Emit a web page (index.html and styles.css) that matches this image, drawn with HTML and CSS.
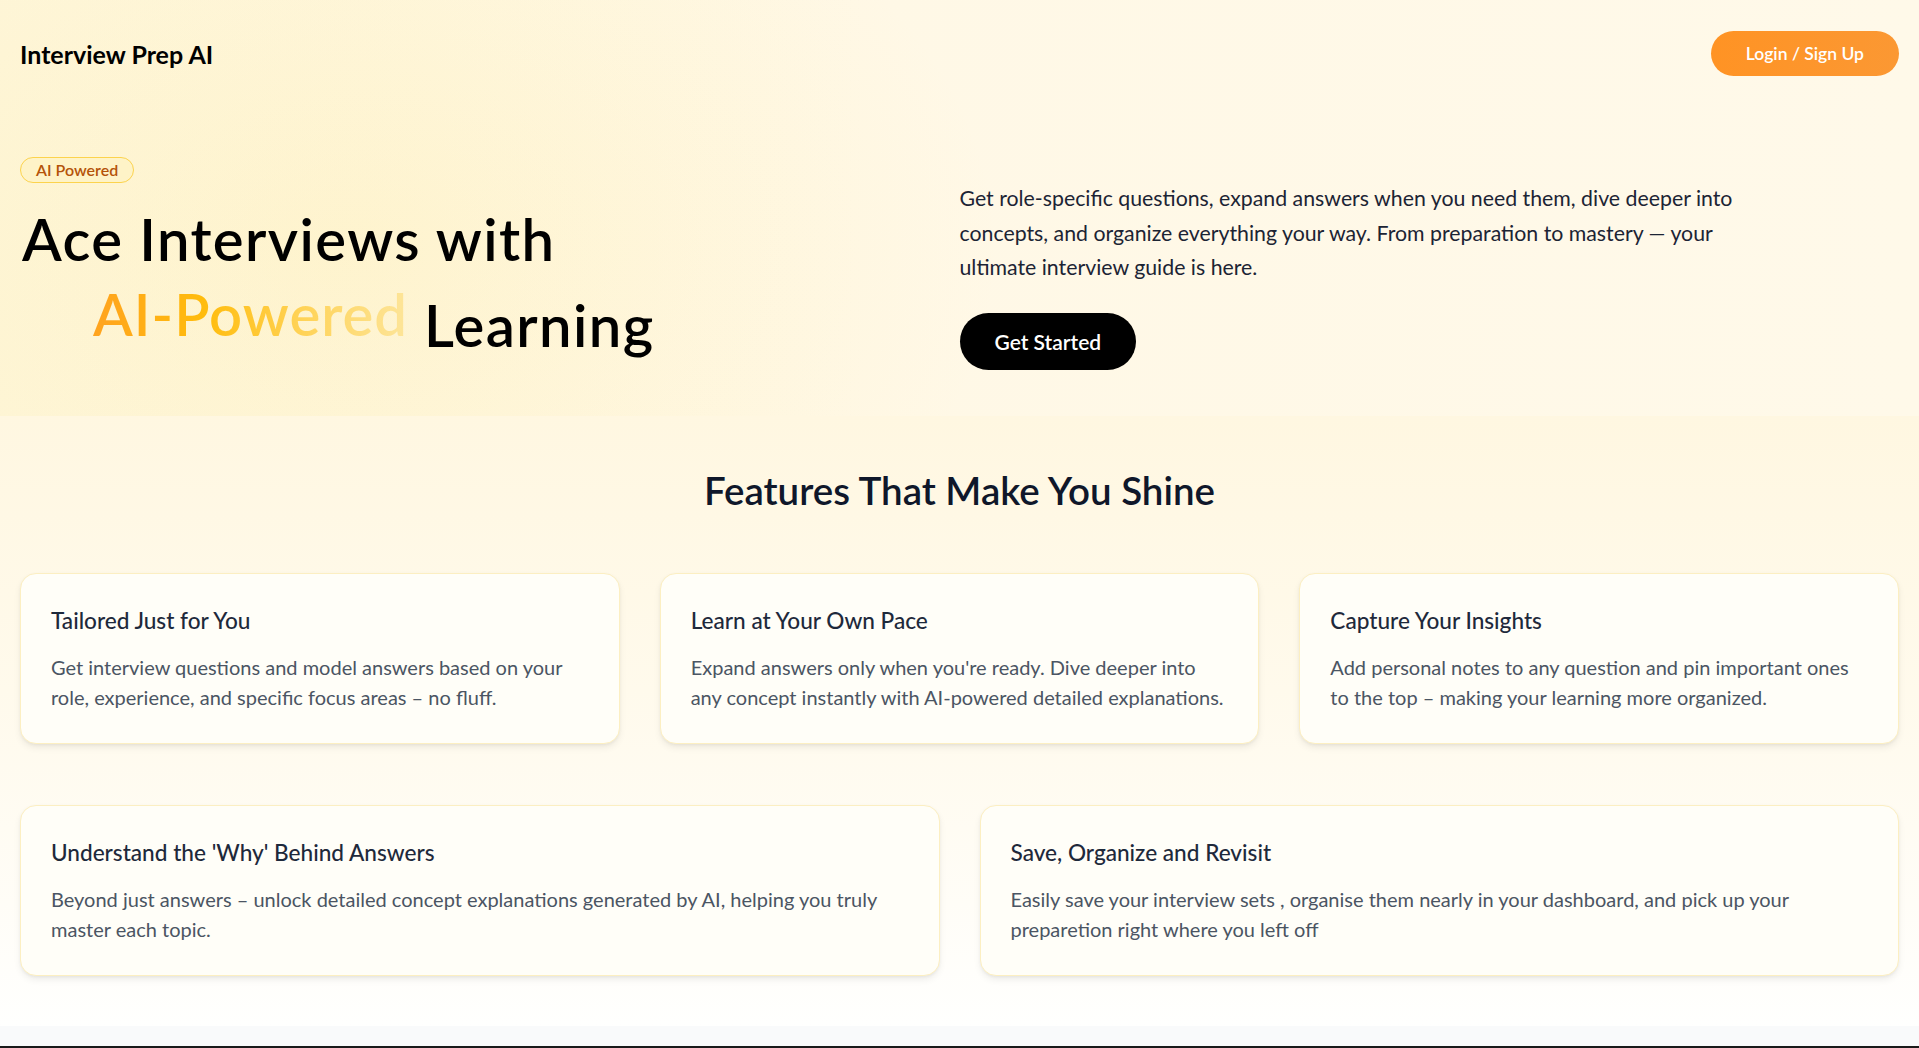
FILE: index.html
```html
<!DOCTYPE html>
<html lang="en">
<head>
<meta charset="utf-8">
<title>Interview Prep AI</title>
<link rel="stylesheet" href="styles.css">
</head>
<body>
<div class="page">
  <section class="hero">
    <div class="hero-glow"></div>
    <div class="hero-inner">
      <header class="nav">
        <div class="logo">Interview Prep AI</div>
        <button class="btn-login">Login / Sign Up</button>
      </header>
      <div class="hero-content">
        <div class="hero-left">
          <div class="badge">AI Powered</div>
          <h1 class="headline">Ace Interviews with<br><span class="accent">AI-Powered</span> Learning</h1>
        </div>
        <div class="hero-right">
          <p class="lead">Get role-specific questions, expand answers when you need them, dive deeper into<br>concepts, and organize everything your way. From preparation to mastery — your<br>ultimate interview guide is here.</p>
          <button class="btn-cta">Get Started</button>
        </div>
      </div>
    </div>
  </section>

  <section class="features">
    <h2 class="features-title">Features That Make You Shine</h2>
    <div class="grid-3">
      <div class="card">
        <h3 class="card-title">Tailored Just for You</h3>
        <p class="card-text">Get interview questions and model answers based on your<br>role, experience, and specific focus areas – no fluff.</p>
      </div>
      <div class="card">
        <h3 class="card-title">Learn at Your Own Pace</h3>
        <p class="card-text">Expand answers only when you're ready. Dive deeper into<br>any concept instantly with AI-powered detailed explanations.</p>
      </div>
      <div class="card">
        <h3 class="card-title">Capture Your Insights</h3>
        <p class="card-text">Add personal notes to any question and pin important ones<br>to the top – making your learning more organized.</p>
      </div>
    </div>
    <div class="grid-2">
      <div class="card">
        <h3 class="card-title">Understand the 'Why' Behind Answers</h3>
        <p class="card-text">Beyond just answers – unlock detailed concept explanations generated by AI, helping you truly<br>master each topic.</p>
      </div>
      <div class="card">
        <h3 class="card-title">Save, Organize and Revisit</h3>
        <p class="card-text">Easily save your interview sets , organise them nearly in your dashboard, and pick up your<br>preparetion right where you left off</p>
      </div>
    </div>
  </section>

  <footer class="footer"></footer>
</div>
<div class="viewport-edge"></div>
</body>
</html>
```

FILE: styles.css
```css
* { box-sizing: border-box; }
html, body { margin: 0; padding: 0; }
body {
  font-family: Lato, "Noto Sans", Arial, sans-serif;
  color: #000;
  background: #ffffff;
}

/* ---------- Hero ---------- */
.hero {
  position: relative;
  overflow: hidden;
  background: linear-gradient(90deg, #FEF6DA 0%, #FFF8E6 45%, #FFF9E9 100%);
}
.hero-glow {
  position: absolute;
  top: -200px;
  left: -300px;
  width: 1300px;
  height: 900px;
  background: radial-gradient(closest-side, rgba(253, 230, 138, 0.2), rgba(253, 230, 138, 0));
  pointer-events: none;
}
.hero-inner {
  position: relative;
  padding: 31px 20px 46px;
}
.nav {
  display: flex;
  justify-content: space-between;
  align-items: center;
  height: 45px;
  margin-bottom: 81px;
}
.logo {
  font-size: 25px;
  font-weight: 700;
  color: #000;
}
.btn-login {
  height: 45px;
  padding: 0 35px;
  border: none;
  border-radius: 999px;
  background: linear-gradient(90deg, #FF9324, #FB9833);
  color: #fff;
  font-family: inherit;
  font-size: 17.5px;
  font-weight: 600;
  cursor: pointer;
}
.hero-content {
  display: flex;
  align-items: flex-start;
}
.hero-left {
  width: 50%;
  padding-right: 16px;
}
.hero-right {
  width: 50%;
  padding-top: 24px;
}
.badge {
  display: flex;
  width: max-content;
  padding: 3px 15px;
  line-height: 18px;
  font-size: 16px;
  font-weight: 600;
  color: #B45309;
  background: #FEF3C7;
  border: 1px solid #FCD34D;
  border-radius: 999px;
}
.headline {
  margin: 18px 0 0;
  padding-left: 2px;
  font-size: 58px;
  font-weight: 600;
  letter-spacing: 1.4px;
  line-height: 75px;
  color: #000;
}
.accent {
  display: inline-block;
  margin-left: 71px;
  vertical-align: 11px;
  font-weight: 600;
  letter-spacing: 1px;
  background: linear-gradient(90deg, #FFA31F 0%, #FFBC0C 35%, #FFD254 65%, #FDE59A 100%);
  -webkit-background-clip: text;
  background-clip: text;
  color: transparent;
}
.lead {
  margin: 0;
  font-size: 21.3px;
  line-height: 34.5px;
  color: #1c2434;
}
.btn-cta {
  margin-top: 28.5px;
  height: 57px;
  padding: 0 35px;
  border: none;
  border-radius: 999px;
  background: #000;
  color: #fff;
  font-family: inherit;
  font-size: 21px;
  font-weight: 600;
  cursor: pointer;
}

/* ---------- Features ---------- */
.features {
  background: linear-gradient(180deg, #FFF7E1 0%, #FFFAEC 45%, #FFFDF7 80%, #FFFFFE 100%);
  padding: 52px 20px 50px;
}
.features-title {
  margin: 0 0 60px;
  text-align: center;
  font-size: 38.5px;
  line-height: 45px;
  font-weight: 600;
  color: #0f172a;
}
.grid-3 {
  display: grid;
  grid-template-columns: repeat(3, 1fr);
  gap: 40px;
}
.grid-2 {
  display: grid;
  grid-template-columns: repeat(2, 1fr);
  gap: 40px;
  margin-top: 61px;
}
.card {
  background: #FFFEF8;
  border: 1px solid #FCEFC2;
  border-radius: 16px;
  padding: 30px 30px 31px;
  box-shadow: 0 4px 8px -2px rgba(0, 0, 0, 0.10), 0 1px 3px rgba(0, 0, 0, 0.04);
}
.card-title {
  margin: 0 0 14px;
  font-size: 22.6px;
  line-height: 34px;
  font-weight: 500;
  color: #1e293b;
}
.card-text {
  margin: 0;
  font-size: 20px;
  line-height: 30px;
  color: #4b5563;
  white-space: nowrap;
}

/* ---------- Footer ---------- */
.footer {
  height: 60px;
  background: #F9FAFB;
}
.viewport-edge {
  position: fixed;
  left: 0;
  right: 0;
  bottom: 0;
  height: 2px;
  background: #1a1a1a;
}
```
